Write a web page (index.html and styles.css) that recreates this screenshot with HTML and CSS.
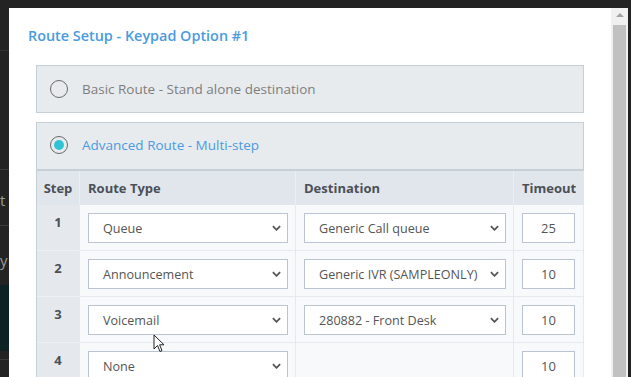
FILE: index.html
```html
<!DOCTYPE html>
<html lang="en">
<head>
    <meta charset="UTF-8">
    <meta name="viewport" content="width=device-width, initial-scale=1.0">
    <title>Route Setup - Keypad Option #1</title>
    <link rel="stylesheet" href="styles.css">
</head>
<body>
    <div class="screen">
        <!-- page behind the modal -->
        <div class="backdrop">
            <div class="bd-row bd-top"></div>
            <div class="bd-row bd-a"></div>
            <div class="bd-row bd-b">t</div>
            <div class="bd-row bd-c">y</div>
            <div class="bd-row bd-teal"></div>
            <div class="bd-row bd-d"></div>
        </div>

        <div class="modal">
            <h2 class="modal-title">Route Setup - Keypad Option #1</h2>

            <div class="route-options">
                <!-- Basic -->
                <div class="panel">
                    <div class="panel-head">
                        <span class="radio"></span>
                        <span class="panel-label">Basic Route - Stand alone destination</span>
                    </div>
                </div>

                <!-- Advanced -->
                <div class="panel">
                    <div class="panel-head panel-head-active">
                        <span class="radio radio-on"></span>
                        <span class="panel-label label-active">Advanced Route - Multi-step</span>
                    </div>

                    <div class="steps">
                        <div class="th th-step">Step</div>
                        <div class="th">Route Type</div>
                        <div class="th">Destination</div>
                        <div class="th th-last">Timeout</div>

                        <div class="td td-step">1</div>
                        <div class="td"><div class="select"><span>Queue</span><svg class="chev" viewBox="0 0 10 6"><polyline points="1,1 5,5 9,1"/></svg></div></div>
                        <div class="td"><div class="select"><span>Generic Call queue</span><svg class="chev" viewBox="0 0 10 6"><polyline points="1,1 5,5 9,1"/></svg></div></div>
                        <div class="td td-last"><div class="num">25</div></div>

                        <div class="td td-step">2</div>
                        <div class="td"><div class="select"><span>Announcement</span><svg class="chev" viewBox="0 0 10 6"><polyline points="1,1 5,5 9,1"/></svg></div></div>
                        <div class="td"><div class="select"><span>Generic IVR (SAMPLEONLY)</span><svg class="chev" viewBox="0 0 10 6"><polyline points="1,1 5,5 9,1"/></svg></div></div>
                        <div class="td td-last"><div class="num">10</div></div>

                        <div class="td td-step">3</div>
                        <div class="td"><div class="select"><span>Voicemail</span><svg class="chev" viewBox="0 0 10 6"><polyline points="1,1 5,5 9,1"/></svg></div></div>
                        <div class="td"><div class="select"><span>280882 - Front Desk</span><svg class="chev" viewBox="0 0 10 6"><polyline points="1,1 5,5 9,1"/></svg></div></div>
                        <div class="td td-last"><div class="num">10</div></div>

                        <div class="td td-step">4</div>
                        <div class="td"><div class="select"><span>None</span><svg class="chev" viewBox="0 0 10 6"><polyline points="1,1 5,5 9,1"/></svg></div></div>
                        <div class="td"></div>
                        <div class="td td-last"><div class="num">10</div></div>
                    </div>
                </div>
            </div>

            <!-- mouse pointer -->
            <svg class="cursor" viewBox="0 0 12 19" width="12" height="19">
                <path d="M1 1 L1 15 L4.5 11.5 L7 17.5 L9 16.6 L6.6 10.8 L11 10.8 Z" fill="#fff" stroke="#222" stroke-width="1" stroke-linejoin="round"/>
            </svg>
        </div>

        <div class="scrollbar">
            <div class="scroll-up"></div>
            <div class="scroll-thumb"></div>
        </div>
        <div class="edge"></div>
    </div>
</body>
</html>
```

FILE: styles.css
```css
body {
    margin: 0;
    height: 377px;
    overflow: hidden;
    background-color: #232323;
    font-family: "Open Sans", "Noto Sans", sans-serif;
}
.screen {
    display: flex;
    height: 369px;
    padding-top: 8px;
}

/* backdrop strip on the left */
.backdrop {
    width: 9px;
    display: flex;
    flex-direction: column;
    overflow: hidden;
    margin-top: -8px;
}
.bd-row {
    color: #9a9a9a;
    font-size: 15px;
    line-height: 20px;
}
.bd-top {
    height: 50px;
    border-bottom: 1px solid #333;
}
.bd-a {
    height: 118px;
    border-bottom: 1px solid #3a3a3a;
}
.bd-b {
    height: 56px;
    padding-top: 20px;
    box-sizing: border-box;
    border-bottom: 1px solid #3a3a3a;
}
.bd-c {
    height: 59px;
    padding-top: 24px;
    box-sizing: border-box;
}
.bd-teal {
    height: 66px;
    background-color: #0d2225;
}
.bd-d {
    height: 8px;
    border-bottom: 1px solid #3a3a3a;
}

/* modal */
.modal {
    position: relative;
    width: 602px;
    box-sizing: border-box;
    padding: 18px 27px 0 19px;
    background-color: #fff;
    overflow: hidden;
}
.modal-title {
    margin: 0 0 19px 0;
    font-size: 14.4px;
    line-height: 20px;
    font-weight: 600;
    color: #4a9be0;
}
.route-options {
    margin-left: 8px;
}
.panel {
    border: 1px solid #c6ced6;
    background-color: #e8ebee;
    margin-bottom: 9px;
}
.panel-head {
    display: flex;
    align-items: center;
    height: 46px;
    padding-left: 13px;
    padding-bottom: 1px;
    box-sizing: border-box;
}
.panel-head-active {
    height: 48px;
    padding-bottom: 2px;
    border-bottom: 2px solid #c6ced6;
}
.radio {
    width: 16px;
    height: 16px;
    border: 1px solid #6a6a6a;
    border-radius: 50%;
    margin-right: 14px;
    display: flex;
    align-items: center;
    justify-content: center;
}
.radio-on::after {
    content: "";
    width: 10px;
    height: 10px;
    border-radius: 50%;
    background-color: #2fc4d5;
}
.panel-label {
    font-size: 13.5px;
    color: #7e7e7e;
}
.label-active {
    color: #4a9be0;
}

/* steps table */
.steps {
    display: grid;
    grid-template-columns: 43px 216px 218px 1fr;
}
.th {
    height: 34px;
    box-sizing: border-box;
    padding: 0 8px;
    display: flex;
    align-items: center;
    font-size: 13px;
    font-weight: 700;
    color: #4b5057;
    background-color: #e1e6ec;
    border-right: 1px solid #edf0f3;
}
.th-step {
    justify-content: center;
    padding: 0;
}
.th-last, .td-last {
    border-right: none;
}
.td {
    height: 46px;
    box-sizing: border-box;
    padding: 8px 7px 7px 8px;
    background-color: #f8f9fa;
    border-right: 1px solid #e6e9ed;
    border-bottom: 1px solid #e6e9ed;
}
.td-step {
    padding: 7px 0 0 0;
    text-align: center;
    font-size: 13px;
    line-height: 20px;
    font-weight: 700;
    color: #4b5057;
    background-color: #e5e9ed;
    border-bottom-color: #eef1f4;
}
.select {
    height: 30px;
    box-sizing: border-box;
    border: 1px solid #b9c4d0;
    background-color: #fff;
    display: flex;
    align-items: center;
    justify-content: space-between;
    padding: 0 6px 0 14px;
    font-size: 12.6px;
    white-space: nowrap;
    color: #555;
}
.chev {
    width: 9px;
    height: 6px;
    flex-shrink: 0;
    fill: none;
    stroke: #555;
    stroke-width: 2;
}
.num {
    width: 53px;
    height: 30px;
    box-sizing: border-box;
    border: 1px solid #b9c4d0;
    background-color: #fff;
    display: flex;
    align-items: center;
    justify-content: center;
    font-size: 13px;
    color: #555;
}
.cursor {
    position: absolute;
    left: 144px;
    top: 326px;
}

/* scrollbar */
.scrollbar {
    width: 17px;
    background-color: #f0f0f0;
    display: flex;
    flex-direction: column;
    align-items: center;
}
.scroll-up {
    width: 0;
    height: 0;
    margin-top: 5px;
    border-left: 4px solid transparent;
    border-right: 4px solid transparent;
    border-bottom: 4px solid #a3a3a3;
}
.scroll-thumb {
    width: 13px;
    flex: 1;
    margin-top: 8px;
    background-color: #c1c1c1;
}
.edge {
    width: 3px;
}
```
